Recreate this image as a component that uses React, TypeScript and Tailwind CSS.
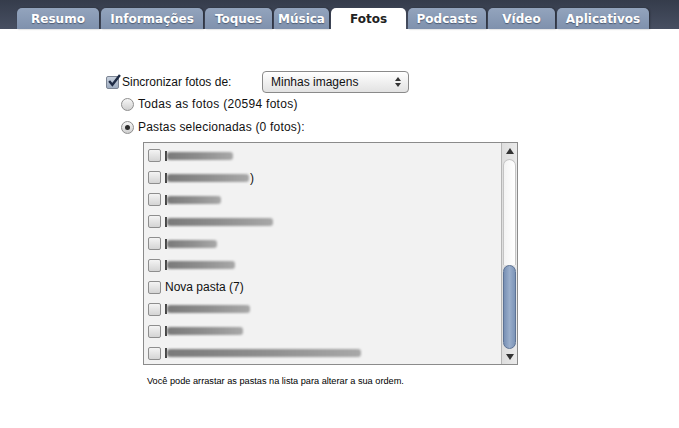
import React from "react";

const tabs = [
  { label: "Resumo", w: "w-[82px]" },
  { label: "Informações", w: "w-[102px]" },
  { label: "Toques", w: "w-[67px]" },
  { label: "Música", w: "w-[55px]" },
  { label: "Fotos", w: "w-[75px]", active: true },
  { label: "Podcasts", w: "w-[78px]" },
  { label: "Vídeo", w: "w-[67px]" },
  { label: "Aplicativos", w: "w-[92px]" },
];

// blurred folder names (widths in px)
const folders: { blur?: number; text?: string; tail?: string }[] = [
  { blur: 66 },
  { blur: 82, tail: ")" },
  { blur: 54 },
  { blur: 106 },
  { blur: 50 },
  { blur: 68 },
  { text: "Nova pasta (7)" },
  { blur: 83 },
  { blur: 76 },
  { blur: 194 },
];

function Checkbox({ checked }: { checked?: boolean }) {
  return (
    <div
      className={`relative w-[13px] h-[13px] shrink-0 rounded-[2px] border ${
        checked
          ? "border-[#7c8594] bg-gradient-to-b from-[#c9d2de] to-[#9eacc0]"
          : "border-[#8e8e8e] bg-gradient-to-b from-[#f4f4f4] to-[#d4d4d4]"
      }`}
    >
      {checked && (
        <svg viewBox="0 0 13 13" className="absolute -top-[3px] left-0 w-[14px] h-[14px]">
          <path d="M2 6.5 L5 10 L12 1" fill="none" stroke="#1f2b45" strokeWidth="2.2" />
        </svg>
      )}
    </div>
  );
}

function Radio({ checked }: { checked?: boolean }) {
  return (
    <div className="flex items-center justify-center w-[13px] h-[13px] shrink-0 rounded-full border border-[#8e8e8e] bg-gradient-to-b from-[#f6f6f6] to-[#cfcfcf]">
      {checked && <div className="w-[5px] h-[5px] rounded-full bg-[#2a2a2a]" />}
    </div>
  );
}

function Tab({ label, w, active }: { label: string; w: string; active?: boolean }) {
  return (
    <div
      className={`${w} h-[21px] flex items-center justify-center rounded-t-[5px] font-bold text-[12px] ${
        active
          ? "bg-white text-[#222]"
          : "bg-gradient-to-b from-[#93a4bd] to-[#7f91ad] text-white [text-shadow:0_1px_1px_rgba(40,50,70,0.6)] shadow-[1px_0_2px_rgba(0,0,0,0.35)]"
      }`}
    >
      {label}
    </div>
  );
}

function Scrollbar() {
  return (
    <div className="w-[16px] h-full flex flex-col border-l border-[#b5b5b5] bg-gradient-to-r from-[#dedede] to-[#eaeaea]">
      <div className="h-[16px] flex items-center justify-center">
        <div className="w-0 h-0 border-l-[4px] border-r-[4px] border-b-[6px] border-l-transparent border-r-transparent border-b-[#333]" />
      </div>
      <div className="flex-1 flex flex-col px-[1px]">
        <div className="flex-1 rounded-t-full border border-[#c4c4c4] border-b-0 bg-gradient-to-r from-[#f3f3f3] to-[#ffffff]" />
        <div className="h-[84px] rounded-full border border-[#5d7395] bg-gradient-to-r from-[#7890b4] via-[#9aaecb] to-[#7d95b8]" />
      </div>
      <div className="h-[15px] flex items-center justify-center">
        <div className="w-0 h-0 border-l-[4px] border-r-[4px] border-t-[6px] border-l-transparent border-r-transparent border-t-[#333]" />
      </div>
    </div>
  );
}

export default function App() {
  return (
    <div className="w-[679px] h-[428px] bg-white overflow-hidden font-['DejaVu_Sans',sans-serif]">
      <div className="h-[29px] flex items-end gap-[2px] pl-[17px] bg-gradient-to-b from-[#353c4b] to-[#474f62]">
        {tabs.map((t) => (
          <Tab key={t.label} {...t} />
        ))}
      </div>

      <div className="pl-[106px] pt-[42px] text-[12px] text-[#111] font-['Liberation_Sans',Arial,sans-serif]">
        <div className="h-[22px] flex items-center">
          <Checkbox checked />
          <span className="ml-[3px] w-[140px]">Sincronizar fotos de:</span>
          <div className="w-[147px] h-[22px] flex items-center justify-between pl-[8px] pr-[7px] rounded-[4px] border border-[#8a8a8a] bg-gradient-to-b from-[#ffffff] to-[#e2e2e2] text-[12px]">
            <span>Minhas imagens</span>
            <div className="flex flex-col gap-[2px]">
              <div className="w-0 h-0 border-l-[3px] border-r-[3px] border-b-[4px] border-l-transparent border-r-transparent border-b-[#333]" />
              <div className="w-0 h-0 border-l-[3px] border-r-[3px] border-t-[4px] border-l-transparent border-r-transparent border-t-[#333]" />
            </div>
          </div>
        </div>
        <div className="h-[22px] flex items-center pl-[15px]">
          <Radio />
          <span className="ml-[4px] tracking-[0.3px]">Todas as fotos (20594 fotos)</span>
        </div>
        <div className="h-[22px] mt-[1px] flex items-center pl-[15px]">
          <Radio checked />
          <span className="ml-[4px] tracking-[0.2px]">Pastas selecionadas (0 fotos):</span>
        </div>

        <div className="ml-[37px] mt-[4px] w-[375px] h-[223px] flex border border-[#8b8b8b] bg-[#f2f2f2]">
          <div className="flex-1 pt-[2px] pl-[4px] flex flex-col">
            {folders.map((f, i) => (
              <div key={i} className="h-[22px] flex items-center gap-[4px]">
                <Checkbox />
                {f.text ? (
                  <span className="text-[12px]">{f.text}</span>
                ) : (
                  <div className="flex items-center">
                    <div className="w-[2px] h-[10px] bg-[#444]" />
                    <div
                      className="h-[8px] rounded-[3px] bg-gradient-to-r from-[#7a7a7a] via-[#8e8e8e] to-[#a8a8a8] blur-[1px]"
                      style={{ width: f.blur }}
                    />
                    {f.tail && <span className="ml-[1px] text-[12px]">{f.tail}</span>}
                  </div>
                )}
              </div>
            ))}
          </div>
          <Scrollbar />
        </div>

        <p className="ml-[41px] mt-[10px] h-[12px] leading-[12px] text-[9.2px] text-black">
          Você pode arrastar as pastas na lista para alterar a sua ordem.
        </p>
      </div>
    </div>
  );
}
